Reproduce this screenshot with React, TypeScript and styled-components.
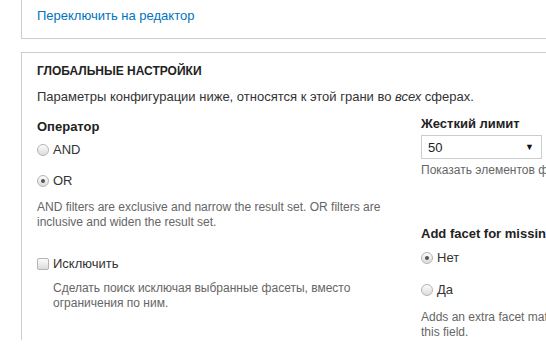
import styled, {createGlobalStyle} from "styled-components";

const GlobalStyle = createGlobalStyle`
  html, body {
    margin: 0;
    padding: 0;
    overflow: hidden;
    background: #fff;
  }
  body {
    font-family: "Liberation Sans", Arial, sans-serif;
    color: #333;
  }
`;

const Page = styled.div`
  width: 1000px;
  padding-left: 21px;
`;

const TopBox = styled.div`
  border-left: 1px solid #ccc;
  border-bottom: 1px solid #ccc;
  padding: 7px 15px 13px;
  font-size: 13px;
  line-height: 18px;
`;

const Link = styled.a`
  color: #0074bd;
  text-decoration: none;
`;

const Panel = styled.section`
  margin-top: 13px;
  border-left: 1px solid #ccc;
  border-top: 1px solid #ccc;
  padding: 10px 15px 0;
`;

const Title = styled.h2`
  margin: 0;
  font-size: 12px;
  line-height: 16px;
  font-weight: bold;
  text-transform: uppercase;
  color: #222;
`;

const Intro = styled.p`
  margin: 9px 0 0;
  font-size: 13px;
  line-height: 18px;
`;

const Columns = styled.div`
  display: grid;
  grid-template-columns: 364px 345px;
  column-gap: 20px;
  margin-top: 9px;
  align-items: start;
`;

const Column = styled.div<{$shift?: number}>`
  display: flex;
  flex-direction: column;
  margin-top: ${(p) => p.$shift ?? 0}px;
`;

const Label = styled.div<{$gap?: number}>`
  font-size: 13px;
  line-height: 18px;
  font-weight: bold;
  color: #222;
  margin-top: ${(p) => p.$gap ?? 0}px;
`;

const Option = styled.label<{$gap?: number}>`
  display: flex;
  align-items: center;
  gap: 4px;
  font-size: 13px;
  line-height: 18px;
  margin-top: ${(p) => p.$gap ?? 0}px;
`;

const Radio = styled.span<{$checked?: boolean}>`
  box-sizing: border-box;
  width: 12px;
  height: 12px;
  border-radius: 50%;
  border: 1px solid #b4b4b4;
  background: linear-gradient(#fcfcfc, #dcdcdc);
  display: inline-flex;
  align-items: center;
  justify-content: center;
  &::after {
    content: "";
    width: 4px;
    height: 4px;
    border-radius: 50%;
    background: ${(p) => (p.$checked ? "#555" : "transparent")};
  }
`;

const Check = styled.span`
  box-sizing: border-box;
  width: 12px;
  height: 12px;
  border-radius: 2px;
  border: 1px solid #b4b4b4;
  background: linear-gradient(#fcfcfc, #dcdcdc);
`;

const Hint = styled.div<{$gap?: number; $indent?: number}>`
  font-size: 12px;
  line-height: 15px;
  color: #666;
  margin-top: ${(p) => p.$gap ?? 0}px;
  padding-left: ${(p) => p.$indent ?? 0}px;
`;

const Select = styled.div`
  box-sizing: border-box;
  width: 121px;
  height: 24px;
  margin-top: 2px;
  border: 1px solid #ccc;
  display: flex;
  align-items: center;
  justify-content: space-between;
  padding: 0 7px 0 6px;
  font-size: 13px;
  color: #222;
`;

const Arrow = styled.span`
  font-size: 9px;
  color: #111;
`;

export default function App() {
  return (
    <>
      <GlobalStyle />
      <Page>
        <TopBox>
          <Link href="#">Переключить на редактор</Link>
        </TopBox>
        <Panel>
          <Title>Глобальные настройки</Title>
          <Intro>
            Параметры конфигурации ниже, относятся к этой грани во <em>всех</em> сферах.
          </Intro>
          <Columns>
            <Column $shift={3}>
              <Label>Оператор</Label>
              <Option $gap={5}>
                <Radio />
                AND
              </Option>
              <Option $gap={13}>
                <Radio $checked />
                OR
              </Option>
              <Hint $gap={10}>
                AND filters are exclusive and narrow the result set. OR filters are
                inclusive and widen the result set.
              </Hint>
              <Option $gap={25}>
                <Check />
                Исключить
              </Option>
              <Hint $gap={8} $indent={16}>
                Сделать поиск исключая выбранные фасеты, вместо ограничения по ним.
              </Hint>
            </Column>
            <Column>
              <Label>Жесткий лимит</Label>
              <Select>
                50
                <Arrow>▼</Arrow>
              </Select>
              <Hint $gap={4}>Показать элементов фасета.</Hint>
              <Label $gap={47}>Add facet for missing values</Label>
              <Option $gap={6}>
                <Radio $checked />
                Нет
              </Option>
              <Option $gap={14}>
                <Radio />
                Да
              </Option>
              <Hint $gap={11}>
                Adds an extra facet matching the items that have no value for this field.
              </Hint>
            </Column>
          </Columns>
        </Panel>
      </Page>
    </>
  );
}
